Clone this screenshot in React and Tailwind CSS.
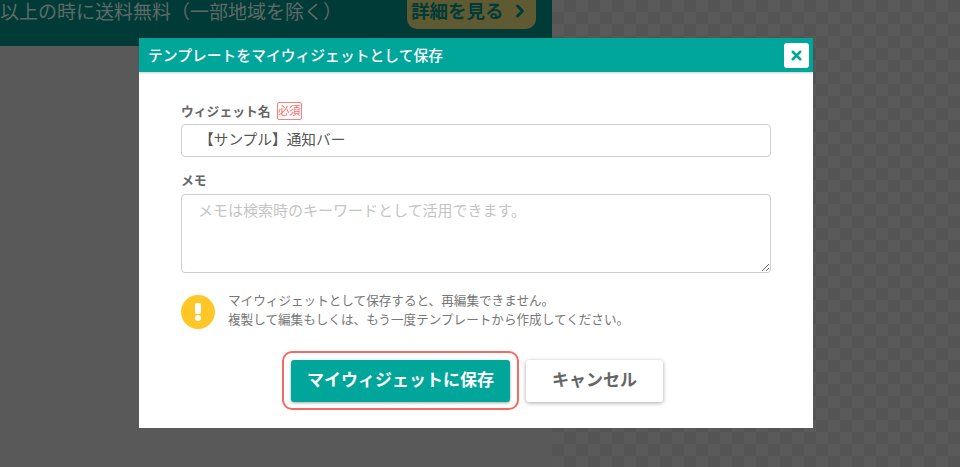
import { X, ChevronRight } from "lucide-react";

export default function App() {
  return (
    <div className="relative h-[467px] w-[960px] overflow-hidden bg-[#585858] bg-[conic-gradient(#545454_25%,#5a5a5a_0_50%,#545454_0_75%,#5a5a5a_0)] bg-[length:24px_24px] font-['Noto_Sans_CJK_JP',sans-serif]">
      {/* page behind the overlay */}
      <div className="h-[467px] w-[552px] bg-[#595959]">
        <div className="flex h-[46px] items-start justify-between overflow-hidden bg-[#003b38] pr-4">
          <span className="mt-[-4px] whitespace-nowrap text-[19px] leading-[30px] text-[#5f6a68]">
            以上の時に送料無料（一部地域を除く）
          </span>
          <div className="mt-[-9px] flex h-[38px] w-[129px] items-center rounded-[10px] bg-[#5f5a32] pl-[4px] pt-[2px] text-[#003b38]">
            <span className="whitespace-nowrap text-[18.5px] font-bold">詳細を見る</span>
            <ChevronRight size={20} strokeWidth={3.5} className="ml-[6px]" />
          </div>
        </div>
      </div>

      {/* modal */}
      <div className="absolute left-[139px] top-[38px] h-[390px] w-[674px] bg-white">
        <div className="flex h-[34px] items-center justify-between bg-[#00a69a] pl-[9px] pr-[4px] shadow-[0_1px_2px_rgba(0,0,0,0.2)]">
          <h2 className="text-[14.8px] font-medium leading-none text-white">テンプレートをマイウィジェットとして保存</h2>
          <button className="flex h-[25px] w-[25px] items-center justify-center rounded-[3px] bg-white text-[#00a69a]">
            <X size={15} strokeWidth={4} />
          </button>
        </div>

        <div className="px-[42px] pt-[29px]">
          <div className="flex h-[19px] items-center">
            <label className="text-[12.8px] font-bold text-[#666666]">ウィジェット名</label>
            <span className="ml-[6px] flex h-[18px] w-[25px] items-center justify-center whitespace-nowrap rounded-[2px] border border-[#ff7d7d] text-[11.5px] leading-none tracking-[-0.5px] text-[#ff6b6b]">
              必須
            </span>
          </div>
          <input
            readOnly
            value="【サンプル】通知バー"
            className="mt-[3.5px] block h-[33px] w-[590px] rounded-[4px] border border-[#cccccc] pb-[4px] pl-[17px] text-[14.7px] text-[#555555] outline-none"
          />

          <label className="mt-[13px] block h-[19px] text-[12.8px] font-bold leading-[19px] text-[#666666]">メモ</label>
          <textarea
            readOnly
            placeholder="メモは検索時のキーワードとして活用できます。"
            className="mt-[5.5px] block h-[78.5px] w-[590px] rounded-[4px] border border-[#cccccc] px-[16px] py-[5px] text-[15px] leading-[20px] text-[#555555] outline-none placeholder:text-[#c4c4c4]"
          />

          <div className="mt-[17px] flex items-end">
            <div className="flex h-[34px] w-[34px] shrink-0 flex-col items-center justify-center rounded-full bg-[#ffc627]">
              <div className="h-[11px] w-[5.5px] rounded-[2px] bg-white" />
              <div className="mt-[1.5px] h-[5.5px] w-[5.5px] rounded-full bg-white" />
            </div>
            <p className="ml-[13px] pb-[1px] text-[12.6px] leading-[19px] text-[#777777]">
              マイウィジェットとして保存すると、再編集できません。
              <br />
              複製して編集もしくは、もう一度テンプレートから作成してください。
            </p>
          </div>

          <div className="mt-[22.5px] ml-[-7px] flex items-center justify-center">
            <div className="rounded-[10px] border-2 border-[#f26b63] px-[7px] py-[6.5px]">
              <button className="block h-[42px] w-[219px] rounded-[3px] bg-[#00a69a] pb-[3px] text-[17px] font-bold text-white shadow-[0_1px_3px_rgba(0,0,0,0.35)]">
                マイウィジェットに保存
              </button>
            </div>
            <button className="ml-[7px] h-[42px] w-[137px] rounded-[3px] bg-white pb-[3px] text-[17px] font-bold text-[#666666] shadow-[0_1px_4px_rgba(0,0,0,0.35)]">
              キャンセル
            </button>
          </div>
        </div>
      </div>
    </div>
  );
}
